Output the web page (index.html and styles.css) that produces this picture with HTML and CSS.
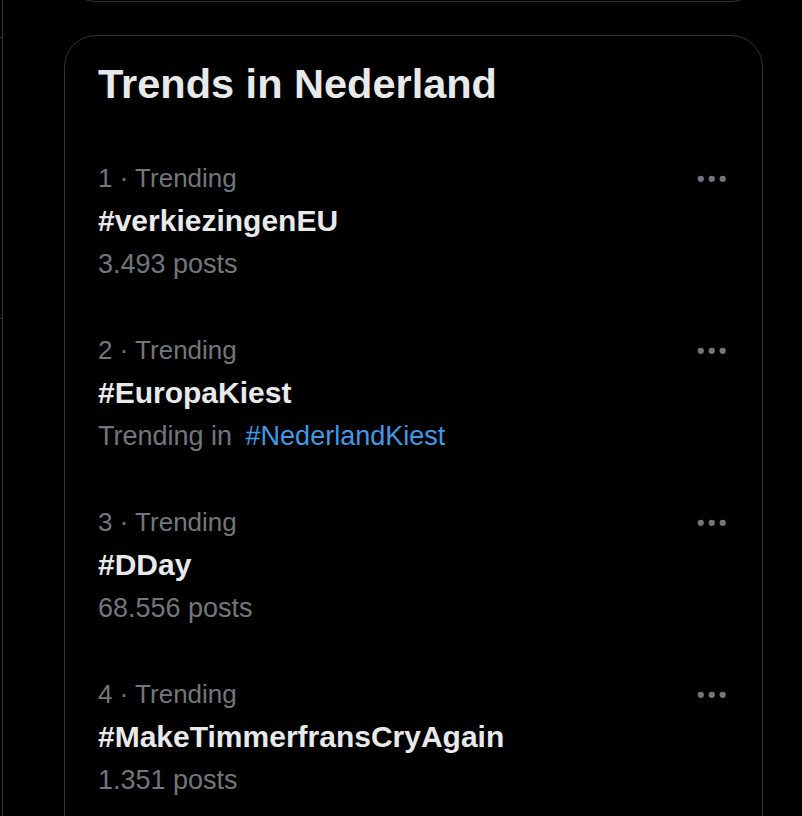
FILE: index.html
```html
<!DOCTYPE html>
<html lang="nl">
<head>
<meta charset="utf-8">
<title>Trends in Nederland</title>
<link rel="stylesheet" href="styles.css">
</head>
<body>
<div class="page">
  <div class="main-strip">
    <div class="strip-seg seg-a"></div>
    <div class="strip-seg seg-b"></div>
  </div>
  <div class="sidebar">
    <div class="card card-prev"></div>
    <section class="card card-trends">
      <h2 class="title">Trends in Nederland</h2>
      <div class="trend">
        <div class="trend-body">
          <div class="meta">1 · Trending</div>
          <div class="name">#verkiezingenEU</div>
          <div class="sub">3.493 posts</div>
        </div>
        <svg class="more" viewBox="0 0 24 24"><circle cx="5" cy="12" r="2"/><circle cx="12" cy="12" r="2"/><circle cx="19" cy="12" r="2"/></svg>
      </div>
      <div class="trend">
        <div class="trend-body">
          <div class="meta">2 · Trending</div>
          <div class="name">#EuropaKiest</div>
          <div class="sub">Trending in <span class="link">#NederlandKiest</span></div>
        </div>
        <svg class="more" viewBox="0 0 24 24"><circle cx="5" cy="12" r="2"/><circle cx="12" cy="12" r="2"/><circle cx="19" cy="12" r="2"/></svg>
      </div>
      <div class="trend">
        <div class="trend-body">
          <div class="meta">3 · Trending</div>
          <div class="name">#DDay</div>
          <div class="sub">68.556 posts</div>
        </div>
        <svg class="more" viewBox="0 0 24 24"><circle cx="5" cy="12" r="2"/><circle cx="12" cy="12" r="2"/><circle cx="19" cy="12" r="2"/></svg>
      </div>
      <div class="trend">
        <div class="trend-body">
          <div class="meta">4 · Trending</div>
          <div class="name">#MakeTimmerfransCryAgain</div>
          <div class="sub">1.351 posts</div>
        </div>
        <svg class="more" viewBox="0 0 24 24"><circle cx="5" cy="12" r="2"/><circle cx="12" cy="12" r="2"/><circle cx="19" cy="12" r="2"/></svg>
      </div>
    </section>
  </div>
</div>
</body>
</html>
```
FILE: styles.css
```css
* { box-sizing: border-box; }
html, body {
  margin: 0;
  padding: 0;
  background: #000;
  height: 100%;
  overflow: hidden;
}
body {
  font-family: "Liberation Sans", Arial, sans-serif;
  color: #e7e9ea;
}
.page {
  display: flex;
  height: 816px;
}
.main-strip {
  width: 3px;
  border-right: 1px solid #2f3336;
  flex-shrink: 0;
}
.strip-seg {
  border-bottom: 1px solid #2f3336;
}
.seg-a { height: 38px; }
.seg-b { height: 281px; }
.sidebar {
  flex: 1;
  padding-left: 61px;
}
.card {
  width: 699px;
  border: 1px solid #2f3336;
  border-radius: 32px;
}
.card-prev {
  height: 200px;
  margin-top: -198px;
}
.card-trends {
  margin-top: 33px;
  padding-top: 24px;
  height: 900px;
}
.title {
  margin: 0 0 28px 0;
  padding: 0 32px 0 33px;
  font-size: 41.5px;
  line-height: 48px;
  font-weight: 700;
  color: #e7e9ea;
}
.trend {
  display: flex;
  justify-content: space-between;
  align-items: flex-start;
  padding: 22px 32px 22px 33px;
}
.meta {
  font-size: 26px;
  line-height: 40px;
  color: #71767b;
}
.name {
  margin-top: 2px;
  font-size: 30px;
  line-height: 42px;
  font-weight: 700;
  color: #e7e9ea;
}
.sub {
  font-size: 27px;
  line-height: 44px;
  color: #71767b;
}
.link {
  color: #4299e6;
  margin-left: 6px;
}
.more {
  width: 37.5px;
  height: 37.5px;
  margin-top: 1.5px;
  fill: #71767b;
  flex-shrink: 0;
}
```
